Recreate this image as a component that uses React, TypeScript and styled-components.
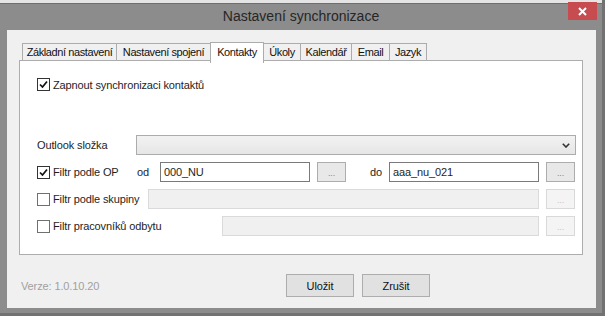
import styled, { createGlobalStyle } from "styled-components";

const Global = createGlobalStyle`
  html, body {
    margin: 0;
    padding: 0;
    background: #e6e6e6;
  }
  body {
    font-family: "Liberation Sans", Arial, sans-serif;
    font-size: 11px;
    letter-spacing: -0.12px;
    color: #1e1e1e;
  }
`;

const tabs = [
  { label: "Základní nastavení", w: 95 },
  { label: "Nastavení spojení", w: 95 },
  { label: "Kontakty", w: 54, active: true },
  { label: "Úkoly", w: 38 },
  { label: "Kalendář", w: 52 },
  { label: "Email", w: 39 },
  { label: "Jazyk", w: 38 },
];

function CheckBox({ checked }: { checked?: boolean }) {
  return (
    <Box $checked={checked}>
      {checked && (
        <svg width="11" height="11" viewBox="0 0 11 11">
          <polyline points="2,5.5 4.5,8 9,2.5" fill="none" stroke="#111" strokeWidth="1.7" />
        </svg>
      )}
    </Box>
  );
}

function Ellipsis({ disabled }: { disabled?: boolean }) {
  return <DotsButton $disabled={disabled}>...</DotsButton>;
}

export default function App() {
  return (
    <>
      <Global />
      <Window>
        <TopStrip />
        <TitleBar>
          <span />
          <Title>Nastavení synchronizace</Title>
          <CloseButton>
            <svg width="9" height="9" viewBox="0 0 9 9">
              <path d="M1 1 L8 8 M8 1 L1 8" stroke="#fff" strokeWidth="2" />
            </svg>
          </CloseButton>
        </TitleBar>
        <Client>
          <TabStrip>
            {tabs.map((t) => (
              <Tab key={t.label} $w={t.w} $active={t.active}>
                {t.label}
              </Tab>
            ))}
          </TabStrip>
          <Panel>
            <TopCheck>
              <CheckBox checked />
              <span>Zapnout synchronizaci kontaktů</span>
            </TopCheck>
            <Rows>
              <Row>
                <FieldLabel $w={99}>Outlook složka</FieldLabel>
                <Select>
                  <svg width="8" height="5" viewBox="0 0 8 5">
                    <path d="M0.8 0.8 L4 4 L7.2 0.8" fill="none" stroke="#333" strokeWidth="1.6" />
                  </svg>
                </Select>
              </Row>
              <Row>
                <CheckField $w={100}>
                  <CheckBox checked />
                  <span>Filtr podle OP</span>
                </CheckField>
                <FieldLabel $w={23}>od</FieldLabel>
                <Input $w={150}>000_NU</Input>
                <Ellipsis />
                <FieldLabel $w={19} $gap={24}>
                  do
                </FieldLabel>
                <Input $w={150}>aaa_nu_021</Input>
                <Ellipsis />
              </Row>
              <Row>
                <CheckField $w={111}>
                  <CheckBox />
                  <span>Filtr podle skupiny</span>
                </CheckField>
                <Input $disabled />
                <Ellipsis disabled />
              </Row>
              <Row>
                <CheckField $w={185}>
                  <CheckBox />
                  <span>Filtr pracovníků odbytu</span>
                </CheckField>
                <Input $disabled />
                <Ellipsis disabled />
              </Row>
            </Rows>
          </Panel>
          <Footer>
            <Version>Verze: 1.0.10.20</Version>
            <Buttons>
              <DialogButton>Uložit</DialogButton>
              <DialogButton>Zrušit</DialogButton>
            </Buttons>
          </Footer>
        </Client>
      </Window>
    </>
  );
}

const Window = styled.div`
  width: 602px;
  height: 313px;
  background: #8c8c8c;
  border-right: 3px solid #727272;
  border-bottom: 3px solid #727272;
  display: flex;
  flex-direction: column;
`;

const TopStrip = styled.div`
  height: 3px;
  background: #e4e4e4;
  border-bottom: 1px solid #6e6e6e;
`;

const TitleBar = styled.div`
  height: 26px;
  display: grid;
  grid-template-columns: 1fr auto 1fr;
`;

const Title = styled.div`
  font-size: 14px;
  letter-spacing: 0;
  color: #262626;
  line-height: 20px;
  padding-top: 2px;
`;

const CloseButton = styled.div`
  justify-self: end;
  margin-top: -2px;
  margin-right: 5px;
  width: 29px;
  height: 18px;
  background: #c74c4f;
  display: flex;
  align-items: center;
  justify-content: center;
`;

const Client = styled.div`
  margin: 0 6px 5px 7px;
  flex: 1;
  background: #f0f0f0;
  padding: 11px 13px 0 12px;
  display: flex;
  flex-direction: column;
`;

const TabStrip = styled.div`
  display: flex;
  align-items: flex-end;
  padding-left: 4px;
  height: 20px;
  position: relative;
  z-index: 1;
`;

const Tab = styled.div<{ $w: number; $active?: boolean }>`
  box-sizing: border-box;
  width: ${(p) => p.$w}px;
  height: ${(p) => (p.$active ? 21 : 18)}px;
  margin-left: -1px;
  border: 1px solid #acacac;
  border-bottom: ${(p) => (p.$active ? "none" : "1px solid #acacac")};
  background: ${(p) => (p.$active ? "#ffffff" : "#f0f0f0")};
  display: flex;
  justify-content: center;
  align-items: ${(p) => (p.$active ? "flex-start" : "center")};
  padding-top: ${(p) => (p.$active ? "3px" : "0")};
  font-size: 11px;
  letter-spacing: -0.4px;
  color: #111;
  white-space: nowrap;
  margin-bottom: ${(p) => (p.$active ? "-2px" : "0")};
`;

const Panel = styled.div`
  box-sizing: border-box;
  height: 195px;
  background: #ffffff;
  border: 1px solid #adadad;
  margin-top: -1px;
  padding: 17px 7px 0 17px;
`;

const TopCheck = styled.label`
  display: flex;
  align-items: center;
  gap: 3px;
  height: 13px;
`;

const Box = styled.span<{ $checked?: boolean }>`
  box-sizing: border-box;
  width: 13px;
  height: 13px;
  border: 1px solid ${(p) => (p.$checked ? "#333" : "#707070")};
  background: #fff;
  display: inline-flex;
  align-items: center;
  justify-content: center;
  flex: none;
`;

const Rows = styled.div`
  margin-top: 44px;
  display: flex;
  flex-direction: column;
  gap: 7px;
`;

const Row = styled.div`
  display: flex;
  align-items: center;
  height: 20px;
`;

const FieldLabel = styled.span<{ $w: number; $gap?: number }>`
  width: ${(p) => p.$w}px;
  margin-left: ${(p) => p.$gap ?? 0}px;
  flex: none;
  white-space: nowrap;
`;

const CheckField = styled.label<{ $w: number }>`
  width: ${(p) => p.$w}px;
  flex: none;
  display: flex;
  align-items: center;
  gap: 3px;
  white-space: nowrap;
`;

const Select = styled.div`
  box-sizing: border-box;
  flex: 1;
  height: 20px;
  margin-right: -1px;
  border: 1px solid #acacac;
  background: linear-gradient(#f2f2f2, #e6e6e6);
  display: flex;
  align-items: center;
  justify-content: flex-end;
  padding-right: 5px;
`;

const Input = styled.div<{ $w?: number; $disabled?: boolean }>`
  box-sizing: border-box;
  ${(p) => (p.$w ? `width: ${p.$w}px; flex: none;` : "flex: 1;")}
  height: 20px;
  border: 1px solid ${(p) => (p.$disabled ? "#dadada" : "#7a7a7a")};
  background: ${(p) => (p.$disabled ? "#f0f0f0" : "#ffffff")};
  padding: 0 3px;
  display: flex;
  align-items: center;
`;

const DotsButton = styled.div<{ $disabled?: boolean }>`
  box-sizing: border-box;
  width: 29px;
  height: 20px;
  margin-left: 7px;
  flex: none;
  border: 1px solid ${(p) => (p.$disabled ? "#d9d9d9" : "#adadad")};
  background: ${(p) => (p.$disabled ? "#f4f4f4" : "#e8e8e8")};
  color: ${(p) => (p.$disabled ? "#c4c4c4" : "#8a8296")};
  font-size: 9px;
  display: flex;
  align-items: center;
  justify-content: center;
  padding-top: 2px;
`;

const Footer = styled.div`
  display: flex;
  align-items: center;
  padding-top: 19px;
`;

const Version = styled.span`
  width: 265px;
  margin-left: 2px;
  color: #a0a0a0;
`;

const Buttons = styled.div`
  display: flex;
  gap: 8px;
`;

const DialogButton = styled.div`
  box-sizing: border-box;
  width: 68px;
  height: 23px;
  border: 1px solid #adadad;
  background: #e1e1e1;
  display: flex;
  align-items: center;
  justify-content: center;
  color: #111;
`;
